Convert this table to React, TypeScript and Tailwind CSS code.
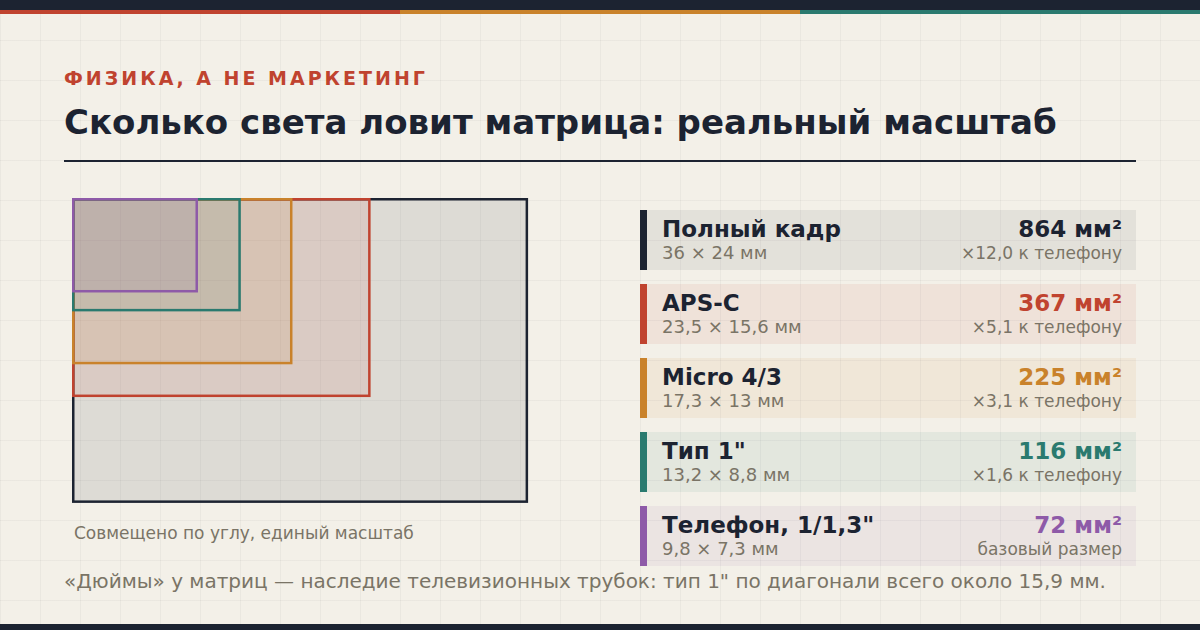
const DARK = "#1c2331";

type Sensor = {
  name: string;
  dims: string;
  area: string;
  ratio: string;
  w: number;
  h: number;
  color: string;
  bar: string;
  row: string;
  value: string;
};

const SENSORS: Sensor[] = [
  { name: "Полный кадр", dims: "36 × 24 мм", area: "864 мм²", ratio: "×12,0 к телефону", w: 36, h: 24, color: DARK, bar: "bg-[#1c2331]", row: "bg-[#1c2331]/7", value: "text-[#1c2331]" },
  { name: "APS-C", dims: "23,5 × 15,6 мм", area: "367 мм²", ratio: "×5,1 к телефону", w: 23.5, h: 15.6, color: "#c0432f", bar: "bg-[#c0432f]", row: "bg-[#c0432f]/8", value: "text-[#c0432f]" },
  { name: "Micro 4/3", dims: "17,3 × 13 мм", area: "225 мм²", ratio: "×3,1 к телефону", w: 17.3, h: 13, color: "#c9822b", bar: "bg-[#c9822b]", row: "bg-[#c9822b]/8", value: "text-[#c9822b]" },
  { name: "Тип 1\"", dims: "13,2 × 8,8 мм", area: "116 мм²", ratio: "×1,6 к телефону", w: 13.2, h: 8.8, color: "#2a7a6f", bar: "bg-[#2a7a6f]", row: "bg-[#2a7a6f]/8", value: "text-[#2a7a6f]" },
  { name: "Телефон, 1/1,3\"", dims: "9,8 × 7,3 мм", area: "72 мм²", ratio: "базовый размер", w: 9.8, h: 7.3, color: "#8e5aa8", bar: "bg-[#8e5aa8]", row: "bg-[#8e5aa8]/8", value: "text-[#8e5aa8]" },
];

const SCALE = 12.6; // px на мм

function SensorDiagram() {
  return (
    <svg width={458} height={306} viewBox="0 0 458 306">
      {SENSORS.map((s) => (
        <rect
          key={s.name}
          x={1.25}
          y={1.25}
          width={s.w * SCALE}
          height={s.h * SCALE}
          fill={s.color}
          fillOpacity={0.1}
          stroke={s.color}
          strokeWidth={2.5}
        />
      ))}
    </svg>
  );
}

function SensorRow({ s }: { s: Sensor }) {
  return (
    <div className={`flex h-[60px] ${s.row}`}>
      <div className={`w-[7px] ${s.bar}`} />
      <div className="flex flex-1 items-center justify-between pl-[15px] pr-[14px]">
        <div>
          <p className="text-[23px] leading-[26px] font-bold text-[#1c2331]">{s.name}</p>
          <p className="text-[18px] leading-[22px] text-[#7a7466]">{s.dims}</p>
        </div>
        <div className="text-right">
          <p className={`text-[23px] leading-[26px] font-bold ${s.value}`}>{s.area}</p>
          <p className="text-[17px] leading-[22px] text-[#7a7466]">{s.ratio}</p>
        </div>
      </div>
    </div>
  );
}

export default function App() {
  return (
    <div
      className="relative w-[1200px] h-[630px] overflow-hidden bg-[#f3f0e8] bg-[linear-gradient(to_right,rgba(30,36,48,0.045)_1px,transparent_1px),linear-gradient(to_bottom,rgba(30,36,48,0.045)_1px,transparent_1px)] bg-size-[40px_40px] flex flex-col"
      style={{ fontFamily: '"DejaVu Sans", Verdana, sans-serif' }}
    >
      <div className="h-[10px] bg-[#1c2331]" />
      <div className="flex h-[4px]">
        <div className="flex-1 bg-[#c0432f]" />
        <div className="flex-1 bg-[#c9822b]" />
        <div className="flex-1 bg-[#2a7a6f]" />
      </div>

      <div className="flex-1 px-16 pt-[52px]">
        <p className="text-[19px] leading-[24px] font-bold tracking-[3px] text-[#c0432f]">ФИЗИКА, А НЕ МАРКЕТИНГ</p>
        <h1 className="mt-[10px] text-[34px] leading-[44px] font-bold text-[#1c2331]">
          Сколько света ловит матрица: реальный масштаб
        </h1>
        <div className="mt-[16px] h-[2px] bg-[#1c2331]" />

        <div className="flex mt-[36px]">
          <div className="w-[540px] pl-[8px]">
            <SensorDiagram />
            <p className="mt-[18px] text-[17px] leading-[22px] text-[#7a7466] pl-[2px]">Совмещено по углу, единый масштаб</p>
          </div>
          <div className="ml-auto w-[496px] pt-[12px] flex flex-col gap-[14px]">
            {SENSORS.map((s) => (
              <SensorRow key={s.name} s={s} />
            ))}
          </div>
        </div>
      </div>

      <p className="absolute left-16 top-[568px] text-[20px] leading-[26px] text-[#7a7466]">
        «Дюймы» у матриц — наследие телевизионных трубок: тип 1" по диагонали всего около 15,9 мм.
      </p>
      <div className="h-[6px] bg-[#1c2331]" />
    </div>
  );
}
